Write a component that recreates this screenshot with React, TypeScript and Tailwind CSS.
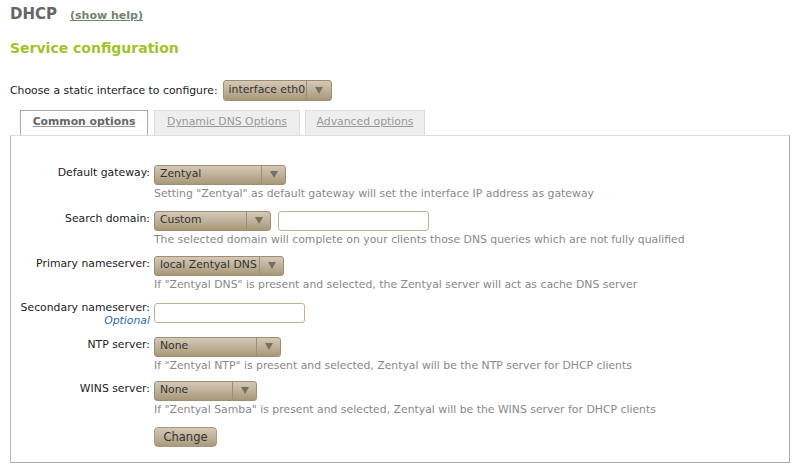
import React from 'react';

// Zentyal DHCP module: "Service configuration" form with tabs.

function Select({ value, className, arrowW = 'w-[24px]' }: { value: string; className: string; arrowW?: string }) {
  return (
    <div
      className={`flex h-[20px] shrink-0 items-center overflow-hidden rounded-[3px] border border-[#9d8e75] bg-linear-to-b from-[#d4c9b6] via-[#bfb199] to-[#a89879] text-[10.85px] text-[#333] ${className}`}
    >
      <span className="min-w-0 flex-1 overflow-hidden whitespace-nowrap pl-[5px]">{value}</span>
      <span
        className={`flex h-full shrink-0 items-center justify-center border-l border-[#9d8e75] ${arrowW}`}
      >
        <svg width="8" height="7" viewBox="0 0 8 7" aria-hidden>
          <path d="M0 0h8L4 7z" fill="#757066" />
        </svg>
      </span>
    </div>
  );
}

function TextInput({ className }: { className: string }) {
  return <div className={`h-[20px] shrink-0 rounded-[3px] border border-[#bdb097] bg-white ${className}`} />;
}

function Help({ children }: { children: React.ReactNode }) {
  return <p className="mt-[2px] whitespace-nowrap leading-[13px] text-[#888]">{children}</p>;
}

function Row({
  label,
  sub,
  className = '',
  children,
}: {
  label: string;
  sub?: string;
  className?: string;
  children: React.ReactNode;
}) {
  return (
    <div className={`flex gap-[4px] ${className}`}>
      <div
        className={`w-[139px] shrink-0 text-right leading-[13px] text-[#222] ${sub ? '-mt-[2px]' : 'pt-[1px]'}`}
      >
        <div className="whitespace-nowrap">{label}</div>
        {sub && <div className="italic text-[#2a6ab8]">{sub}</div>}
      </div>
      <div className="flex flex-col">{children}</div>
    </div>
  );
}

export default function App() {
  return (
    <div className="h-[472px] w-[798px] bg-white pl-[10px] pr-[8px] pt-[5px] font-['DejaVu_Sans',sans-serif] text-[10.85px] text-[#222]">
      <div className="flex items-baseline gap-[13px]">
        <h1 className="text-[15px] font-bold leading-[19px] text-[#666]">DHCP</h1>
        <a className="text-[11px] font-bold text-[#71846f] underline">(show help)</a>
      </div>

      <h2 className="mt-[14px] text-[14px] font-bold leading-[18px] text-[#9fc42a]">Service configuration</h2>

      <div className="mt-[23px] flex items-center gap-[5px]">
        <span className="leading-[13px]">Choose a static interface to configure:</span>
        <Select value="interface eth0" className="h-[21px] w-[109px]" arrowW="w-[25px]" />
      </div>

      {/* tabs */}
      <div className="mt-[9px] flex h-[25px] items-stretch pl-[10px]">
        <div className="flex w-[128px] items-center justify-center border border-b-0 border-[#aaa] bg-white font-bold text-[#666]">
          <span className="underline decoration-[#999]">Common options</span>
        </div>
        <div className="ml-[6px] flex w-[146px] items-center justify-center border border-b-0 border-[#ddd] bg-[#eee] text-[#999]">
          <span className="underline">Dynamic DNS Options</span>
        </div>
        <div className="ml-[5px] flex w-[120px] items-center justify-center border border-b-0 border-[#ddd] bg-[#eee] text-[#999]">
          <span className="underline">Advanced options</span>
        </div>
      </div>

      {/* tab content */}
      <div className="w-[780px] border border-t-[#ddd] border-r-[#aaa] border-b-[#aaa] border-l-[#bbb] pb-[15px] pt-[29px]">
        <Row label="Default gateway:">
          <Select value="Zentyal" className="w-[132px]" />
          <Help>Setting "Zentyal" as default gateway will set the interface IP address as gateway</Help>
        </Row>

        <Row label="Search domain:" className="mt-[11px]">
          <div className="flex gap-[7px]">
            <Select value="Custom" className="w-[117px]" />
            <TextInput className="w-[151px]" />
          </div>
          <Help>The selected domain will complete on your clients those DNS queries which are not fully qualified</Help>
        </Row>

        <Row label="Primary nameserver:" className="mt-[10px]">
          <Select value="local Zentyal DNS" className="w-[130px]" />
          <Help>If "Zentyal DNS" is present and selected, the Zentyal server will act as cache DNS server</Help>
        </Row>

        <Row label="Secondary nameserver:" sub="Optional" className="mt-[12px]">
          <TextInput className="w-[151px]" />
        </Row>

        <Row label="NTP server:" className="mt-[10px]">
          <Select value="None" className="w-[127px]" />
          <Help>If "Zentyal NTP" is present and selected, Zentyal will be the NTP server for DHCP clients</Help>
        </Row>

        <Row label="WINS server:" className="mt-[9px]">
          <Select value="None" className="w-[103px]" />
          <Help>If "Zentyal Samba" is present and selected, Zentyal will be the WINS server for DHCP clients</Help>
        </Row>

        <div className="mt-[11px] pl-[143px]">
          <button
            type="button"
            className="h-[20px] w-[63px] rounded-[4px] border border-[#a8997f] bg-linear-to-b from-[#d4c9b6] via-[#c0b29a] to-[#aa9a7c] text-[11.5px] leading-[18px] text-[#333]"
          >
            Change
          </button>
        </div>
      </div>
    </div>
  );
}
